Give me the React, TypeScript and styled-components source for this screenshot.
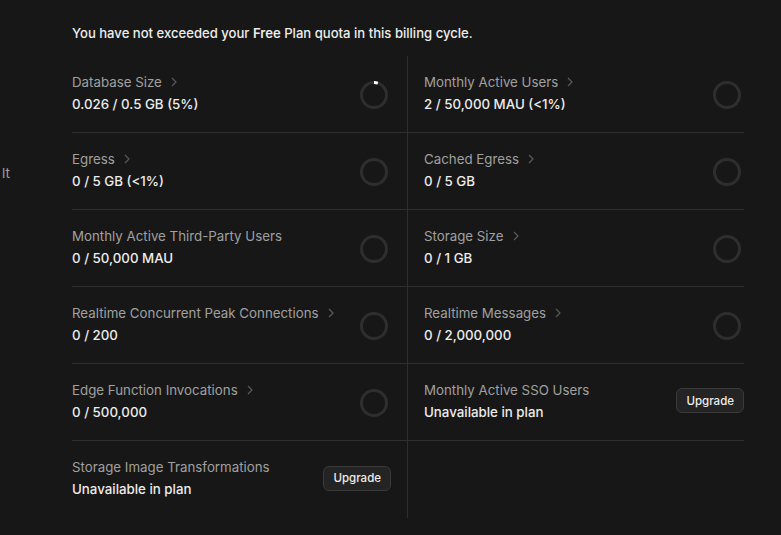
import React from "react";
import styled, { createGlobalStyle } from "styled-components";

const Global = createGlobalStyle`
  html, body { margin: 0; padding: 0; background: #171717; }
  body { font-family: Inter, "Noto Sans", sans-serif; color: #ededed; -webkit-font-smoothing: antialiased; }
`;

const Page = styled.div`
  width: 781px;
  height: 535px;
  display: flex;
  overflow: hidden;
  background: #171717;
`;

const SideStub = styled.div`
  width: 72px;
  flex: none;
  box-sizing: border-box;
  padding: 164px 0 0 2px;
  font-size: 13.5px;
  line-height: 18px;
  color: #a0a0a0;
`;

const Main = styled.div`
  width: 672px;
  display: flex;
  flex-direction: column;
  padding-top: 24px;
`;

const Heading = styled.p`
  margin: 0 0 14px;
  font-size: 13.1px;
  line-height: 18px;
  font-weight: 500;
  color: #ededed;
  b { font-weight: 600; }
`;

const Grid = styled.div`
  display: grid;
  grid-template-columns: 336px 336px;
`;

const Cell = styled.div<{ $side: "left" | "right"; $last?: boolean }>`
  height: 77px;
  box-sizing: border-box;
  display: flex;
  align-items: center;
  justify-content: space-between;
  padding: ${(p) => (p.$side === "left" ? "0 18px 3px 0" : "0 2px 3px 16px")};
  border-right: ${(p) => (p.$side === "left" ? "1px solid #2e2e2e" : "none")};
  border-bottom: ${(p) => (p.$last ? "none" : "1px solid #2e2e2e")};
`;

const Info = styled.div`
  display: flex;
  flex-direction: column;
  gap: 4px;
`;

const Label = styled.div`
  display: flex;
  align-items: center;
  gap: 8px;
  font-size: 13.3px;
  line-height: 18px;
  color: #a0a0a0;
`;

const Value = styled.div`
  font-size: 13.3px;
  line-height: 18px;
  font-weight: 500;
  color: #ededed;
`;

const UpgradeButton = styled.button`
  height: 25px;
  padding: 0 9px;
  margin-right: -2px;
  border: 1px solid #3a3a3a;
  border-radius: 6px;
  background: #242424;
  color: #ededed;
  font-family: inherit;
  font-size: 11.5px;
  font-weight: 500;
`;

const RingSvg = styled.svg`
  flex: none;
  margin-top: 4px;
`;

const Chevron = () => (
  <svg width="8" height="10" viewBox="0 0 8 10" fill="none">
    <path d="M2 1l4 4-4 4" stroke="#5a5a5a" strokeWidth="1.2" />
  </svg>
);

const Ring = ({ pct }: { pct: number }) => {
  const r = 12.5;
  const c = 2 * Math.PI * r;
  return (
    <RingSvg width="30" height="30" viewBox="0 0 30 30">
      <circle cx="15" cy="15" r={r} fill="none" stroke="#2e2e2e" strokeWidth="3" />
      {pct > 0 && (
        <circle
          cx="15"
          cy="15"
          r={r}
          fill="none"
          stroke="#ffffff"
          strokeWidth="3"
          strokeDasharray={`${(pct / 100) * c} ${c}`}
          transform="rotate(-90 15 15)"
        />
      )}
    </RingSvg>
  );
};

type Item = { label: string; value: string; chevron?: boolean; pct?: number; upgrade?: boolean };

const items: Item[] = [
  { label: "Database Size", value: "0.026 / 0.5 GB (5%)", chevron: true, pct: 5 },
  { label: "Monthly Active Users", value: "2 / 50,000 MAU (<1%)", chevron: true, pct: 0 },
  { label: "Egress", value: "0 / 5 GB (<1%)", chevron: true, pct: 0 },
  { label: "Cached Egress", value: "0 / 5 GB", chevron: true, pct: 0 },
  { label: "Monthly Active Third-Party Users", value: "0 / 50,000 MAU", pct: 0 },
  { label: "Storage Size", value: "0 / 1 GB", chevron: true, pct: 0 },
  { label: "Realtime Concurrent Peak Connections", value: "0 / 200", chevron: true, pct: 0 },
  { label: "Realtime Messages", value: "0 / 2,000,000", chevron: true, pct: 0 },
  { label: "Edge Function Invocations", value: "0 / 500,000", chevron: true, pct: 0 },
  { label: "Monthly Active SSO Users", value: "Unavailable in plan", upgrade: true },
  { label: "Storage Image Transformations", value: "Unavailable in plan", upgrade: true },
];

export default function App() {
  return (
    <Page>
      <Global />
      <SideStub>lt</SideStub>
      <Main>
        <Heading>
          You have not exceeded your <b>Free</b> Plan quota in this billing cycle.
        </Heading>
        <Grid>
          {items.map((it, i) => (
            <Cell key={it.label} $side={i % 2 === 0 ? "left" : "right"} $last={i >= 10}>
              <Info>
                <Label>
                  {it.label}
                  {it.chevron && <Chevron />}
                </Label>
                <Value>{it.value}</Value>
              </Info>
              {it.upgrade ? <UpgradeButton>Upgrade</UpgradeButton> : <Ring pct={it.pct ?? 0} />}
            </Cell>
          ))}
          <Cell $side="right" $last />
        </Grid>
      </Main>
    </Page>
  );
}
